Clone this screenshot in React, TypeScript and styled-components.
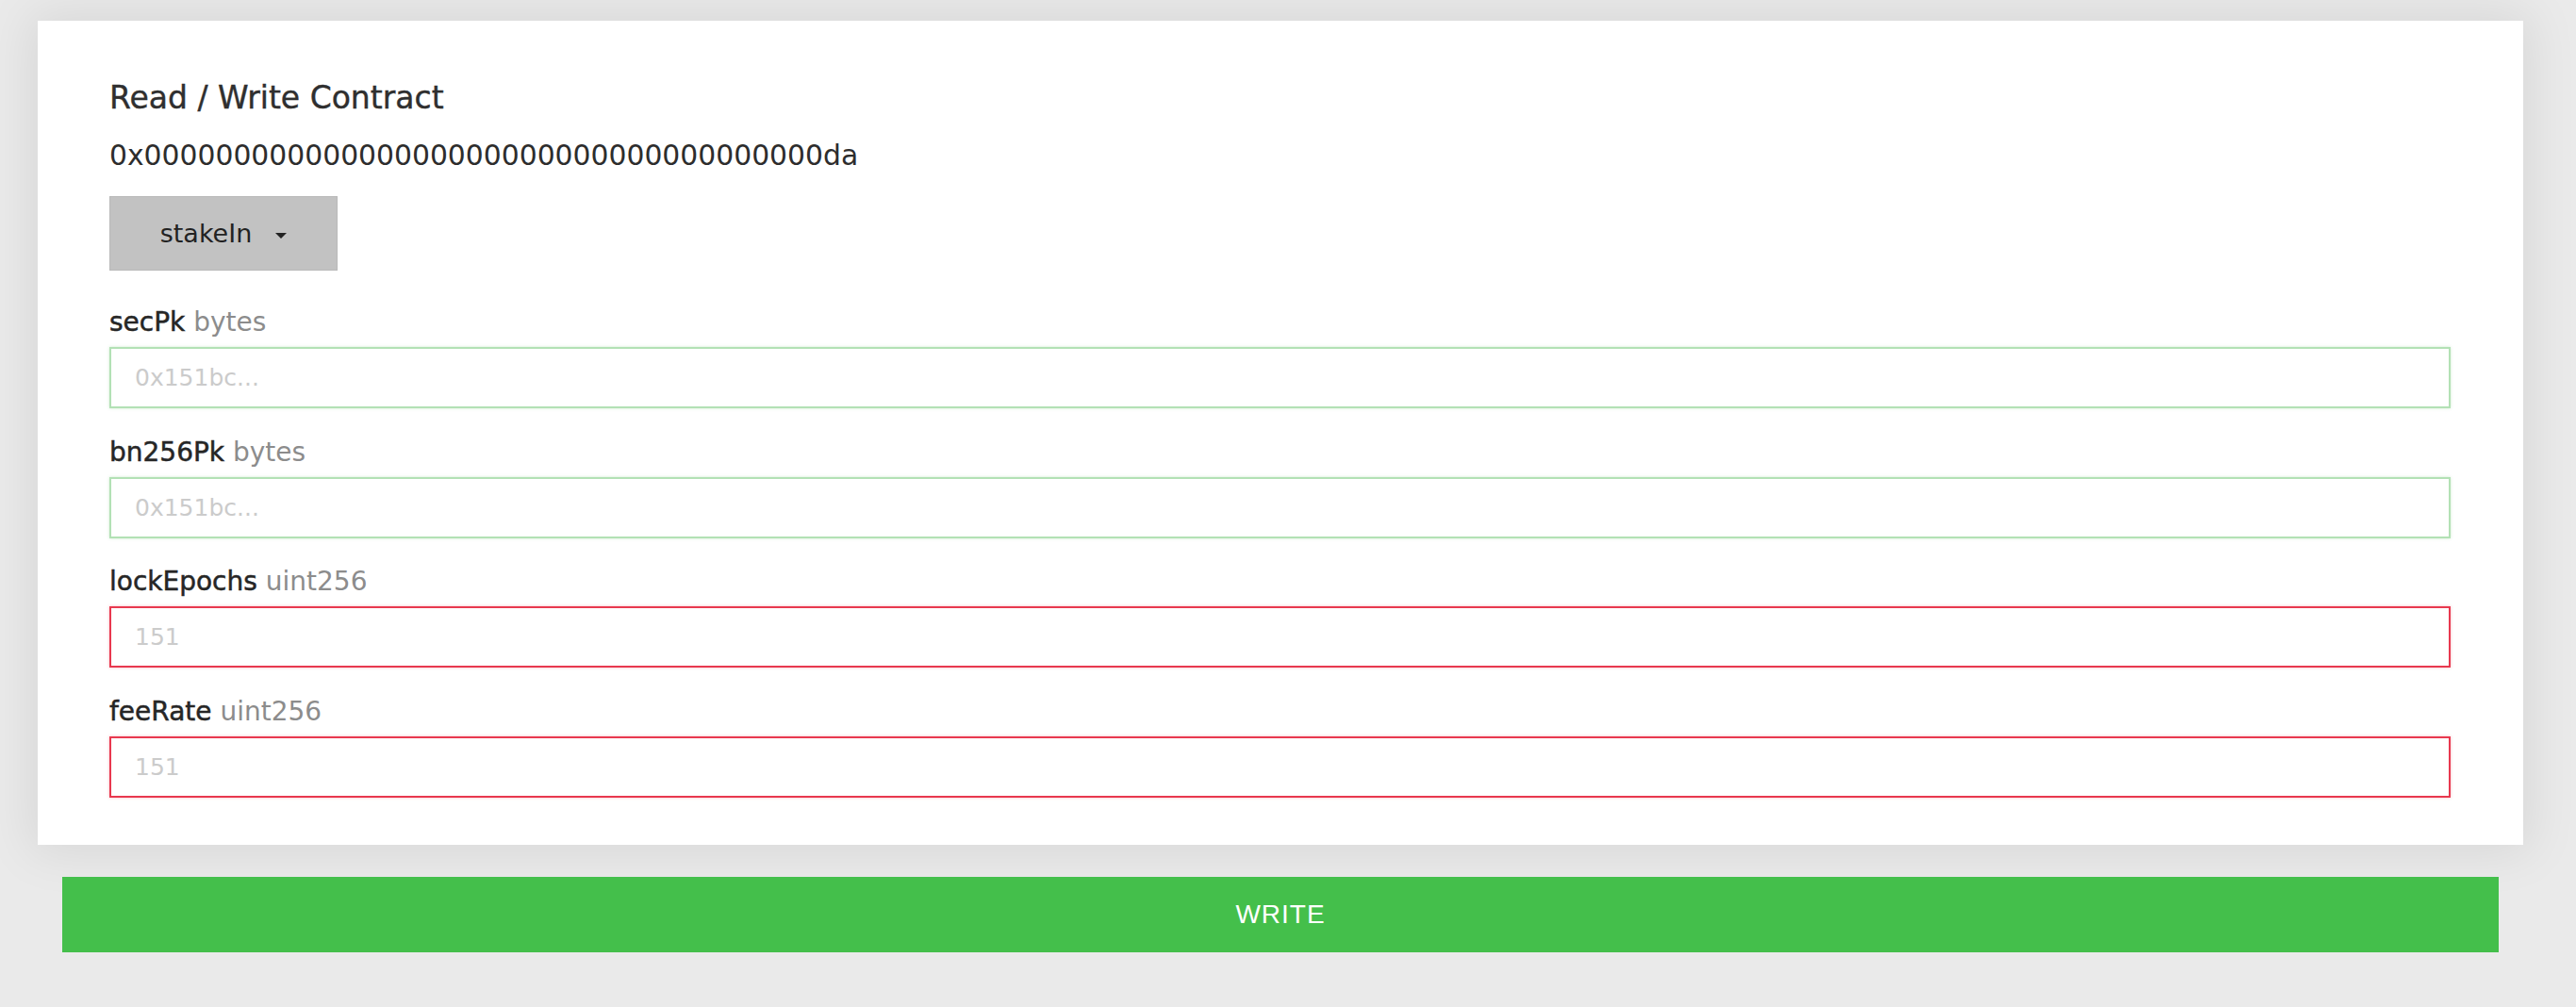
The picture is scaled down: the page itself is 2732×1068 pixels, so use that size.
import React from "react";
import styled, { createGlobalStyle } from "styled-components";

const GlobalStyle = createGlobalStyle`
  html, body {
    margin: 0;
    padding: 0;
    background: #eaeaea;
    min-height: 100%;
  }
  body {
    font-family: "DejaVu Sans", "Noto Sans", sans-serif;
    color: #333;
  }
  * { box-sizing: border-box; }
`;

const Page = styled.div`
  display: flex;
  flex-direction: column;
  align-items: flex-start;
  padding-top: 22px;
  min-height: 1068px;
`;

const Card = styled.section`
  margin-left: 40px;
  width: 2636px;
  background: #ffffff;
  padding: 62px 77px 50px 76px;
  box-shadow: 0 0 50px 8px rgba(0, 0, 0, 0.08);
  display: flex;
  flex-direction: column;
`;

const Title = styled.h2`
  margin: 0;
  font-size: 33px;
  line-height: 40px;
  font-weight: normal;
  color: #2f2f2f;
  -webkit-text-stroke: 0.4px #2f2f2f;
`;

const Address = styled.div`
  margin-top: 23px;
  font-size: 29.8px;
  line-height: 36px;
  color: #2d2d2d;
`;

const Dropdown = styled.button`
  margin-top: 25px;
  width: 242px;
  height: 79px;
  background: #c2c2c2;
  border: 1px solid #b9b9b9;
  display: flex;
  align-items: center;
  justify-content: center;
  gap: 25px;
  font-family: "DejaVu Sans", sans-serif;
  font-size: 27px;
  color: #222;
  padding: 0;
  cursor: pointer;
`;

const Caret = styled.span`
  width: 0;
  height: 0;
  border-left: 6px solid transparent;
  border-right: 6px solid transparent;
  border-top: 6px solid #222;
  margin-top: 4px;
`;

const Fields = styled.div`
  margin-top: 38px;
  display: flex;
  flex-direction: column;
  gap: 29.5px;
`;

const Field = styled.div`
  display: flex;
  flex-direction: column;
  gap: 9px;
`;

const Label = styled.label`
  font-size: 28px;
  line-height: 34px;
  display: flex;
  gap: 0.32em;
`;

const Name = styled.span`
  color: #262626;
  -webkit-text-stroke: 0.5px #262626;
`;

const Type = styled.span`
  color: #8c8c8c;
`;

const Input = styled.input<{ $valid: boolean }>`
  width: 100%;
  height: 65px;
  border: 2px solid ${(p) => (p.$valid ? "#b3e1b5" : "#e8394f")};
  box-shadow: 0 0 3px ${(p) => (p.$valid ? "rgba(120,200,125,0.35)" : "rgba(232,57,79,0.35)")};
  outline: none;
  padding: 0 0 0 25px;
  font-family: "DejaVu Sans", sans-serif;
  font-size: 25px;
  color: #333;
  background: #fff;
  &::placeholder {
    color: #cbcbcb;
  }
`;

const WriteButton = styled.button`
  margin-top: 34px;
  margin-left: 66px;
  width: 2584px;
  height: 80px;
  background: #44bf4b;
  border: none;
  color: #ffffff;
  font-family: "Liberation Sans", Arial, sans-serif;
  font-size: 28px;
  letter-spacing: 1px;
  padding: 0;
  cursor: pointer;
`;

type FieldDef = { name: string; type: string; placeholder: string; valid: boolean };

const fields: FieldDef[] = [
  { name: "secPk", type: "bytes", placeholder: "0x151bc...", valid: true },
  { name: "bn256Pk", type: "bytes", placeholder: "0x151bc...", valid: true },
  { name: "lockEpochs", type: "uint256", placeholder: "151", valid: false },
  { name: "feeRate", type: "uint256", placeholder: "151", valid: false },
];

export default function App() {
  return (
    <>
      <GlobalStyle />
      <Page>
        <Card>
          <Title>Read / Write Contract</Title>
          <Address>0x00000000000000000000000000000000000000da</Address>
          <Dropdown>
            <span>stakeIn</span>
            <Caret />
          </Dropdown>
          <Fields>
            {fields.map((f) => (
              <Field key={f.name}>
                <Label>
                  <Name>{f.name}</Name>
                  <Type>{f.type}</Type>
                </Label>
                <Input $valid={f.valid} placeholder={f.placeholder} />
              </Field>
            ))}
          </Fields>
        </Card>
        <WriteButton>WRITE</WriteButton>
      </Page>
    </>
  );
}
